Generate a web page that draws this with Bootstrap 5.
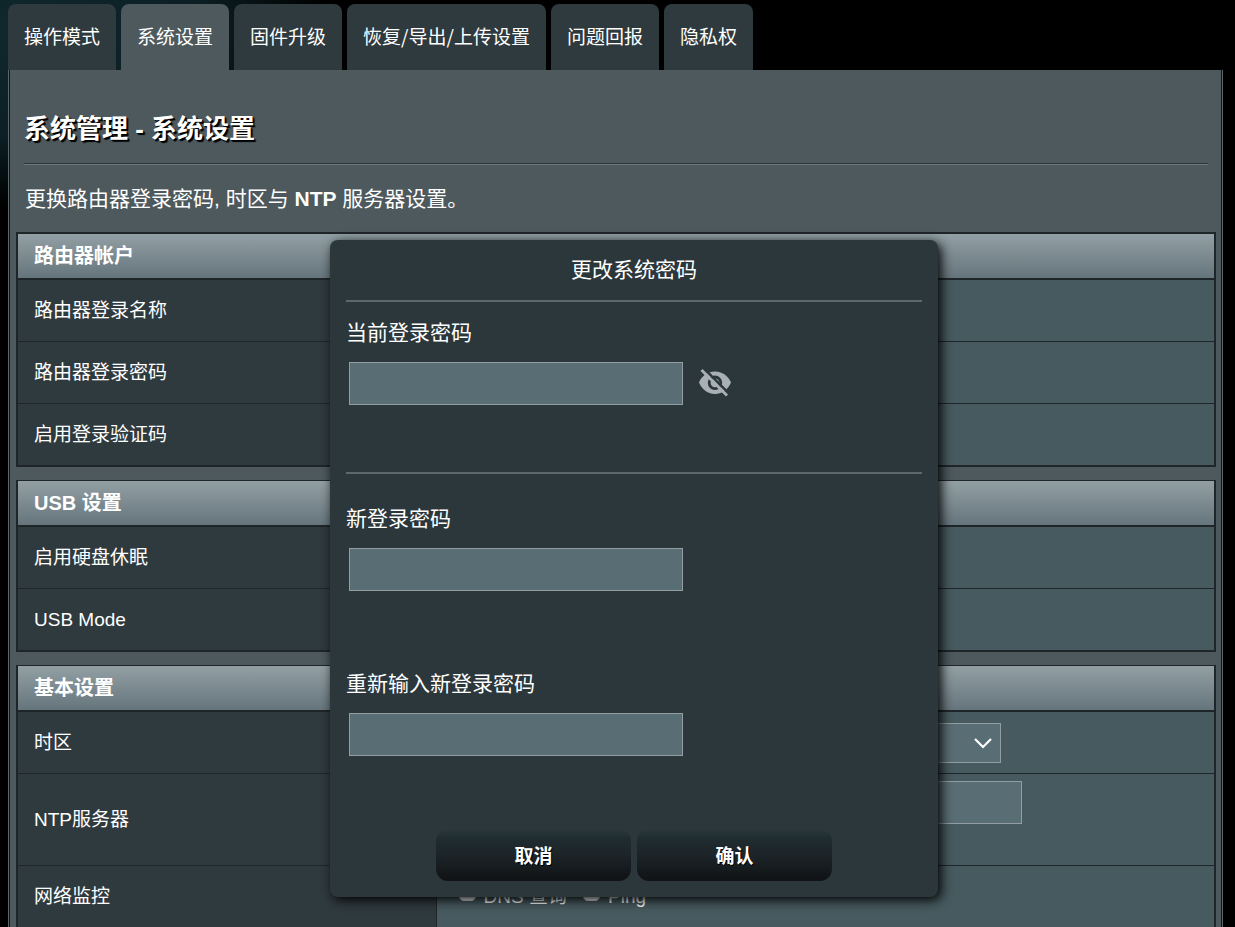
<!DOCTYPE html>
<html lang="zh-CN">
<head>
<meta charset="utf-8">
<meta name="viewport" content="width=device-width, initial-scale=1">
<title>系统管理 - 系统设置</title>
<link href="https://cdn.jsdelivr.net/npm/bootstrap@5.3.0/dist/css/bootstrap.min.css" rel="stylesheet">
<style>
  body {
    background: radial-gradient(ellipse 330px 175px at 0 30px, #0f272d 0, #0c2025 60%, #000 100%) no-repeat #000;
    color: #fff;
    font-family: "Liberation Sans", "Noto Sans CJK SC", sans-serif;
    font-size: 19px;
    line-height: 30px;
  }
  .page-tabs { padding: 4px 8px 0; gap: 5px; font-family: "Noto Sans CJK SC", sans-serif; }
  .page-tabs .nav-link {
    padding: 17px 16px 19px;
    border: 0;
    border-radius: 8px 8px 0 0;
    background: #2f3a3e;
    color: #fff;
    white-space: nowrap;
  }
  .page-tabs .nav-link.active { background: #4d595d; color: #fff; }
  .panel {
    margin: 0 12px 0 8px;
    padding: 43px 6px 0 7px;
    background: #4d595d;
    border: solid #5b676b;
    border-width: 0 1px;
    box-shadow: inset 1px 0 #101517, inset -1px 0 #101517;
  }
  .panel-title { margin: 0 8px 18px; font-size: 26px; line-height: 32px; text-shadow: 1px 1px 0 #000, 2px 2px 1px #000; }
  .rule { height: 2px; background: linear-gradient(#2b373b 50%, #6e787c 50%); margin: 0 8px 19px; }
  .intro { margin: 0 9px 18px; font-size: 21px; }
  .settings { border: 2px solid #1f2629; margin-bottom: 13px; }
  .settings + .settings { border-top-width: 1px; }
  .settings table { width: 100%; border-collapse: separate; border-spacing: 0; table-layout: fixed; }
  .settings thead th {
    height: 46px;
    padding: 0 16px;
    font-size: 20px;
    background: linear-gradient(#92a0a5, #66757c);
    border-bottom: 2px solid #1f2629;
  }
  .settings tbody th, .settings tbody td { height: 62px; border-bottom: 1px solid #1f2629; }
  .settings tbody tr:last-child > * { border-bottom: 0; height: 61px; }
  .settings tbody th { padding: 0 16px; background: #2f3a3e; font-weight: 400; border-right: 1px solid #1f2629; }
  .settings tbody td { padding: 7px 14px; background: #475a5f; }
  .settings .tall-row > * { height: 92px; }
  .field, .field:focus {
    height: 43px;
    padding: 0 12px;
    border: 1px solid #929ea1;
    border-radius: 0;
    background-color: #596d74;
    color: #fff;
    font-size: 19px;
  }
  .zone-field { width: 550px; height: 40px; background-size: 20px 20px; background-position: right 7px center;
    background-image: url("data:image/svg+xml,%3Csvg xmlns='http://www.w3.org/2000/svg' viewBox='0 0 20 20'%3E%3Cpath d='M2 6l8 8 8-8' fill='none' stroke='white' stroke-width='2.2'/%3E%3C/svg%3E"); }
  .ntp-field { width: 571px; }
  .tick { width: 17px; height: 17px; margin: 2px 0 0; border-radius: 2px; }
  .pw-dialog {
    position: absolute;
    top: 240px;
    left: 330px;
    width: 608px;
    padding: 0 16px 16px;
    background: #2b373b;
    border-radius: 8px;
    box-shadow: 3px 3px 12px 0 #000;
  }
  .pw-title { font-size: 21px; line-height: 60px; font-weight: 400; margin: 0; }
  .pw-rule { height: 2px; background: #5d686b; }
  .pw-group { padding-top: 30px; margin-bottom: 48px; }
  .pw-group.first { padding-top: 16px; margin-bottom: 67px; }
  .pw-group.final { margin-bottom: 73px; }
  .pw-group label { display: block; font-size: 21px; margin-bottom: 14px; }
  .pw-field, .pw-field:focus { width: 334px; margin-left: 3px; }
  .eye-btn { width: 32px; height: 32px; margin-left: 16px; padding: 0; border: 0; background: none; }
  .eye-btn svg { display: block; }
  .pw-btn, .pw-btn:hover {
    width: 195px;
    height: 52px;
    padding: 10px 12px 6px;
    border: 0;
    border-radius: 12px;
    background: linear-gradient(#2b373b 0, #1f2c30 18%, #1d2629 45%, #101215 100%);
    color: #fff;
    font-size: 19px;
    font-weight: 700;
    text-shadow: 1px 1px 0 #000;
  }
  .pw-actions { gap: 6px; }
</style>
</head>
<body>
<div class="vh-100 overflow-hidden position-relative">
  <nav class="nav page-tabs flex-nowrap">
    <a class="nav-link" href="#">操作模式</a>
    <a class="nav-link active" href="#" aria-current="page">系统设置</a>
    <a class="nav-link" href="#">固件升级</a>
    <a class="nav-link" href="#">恢复/导出/上传设置</a>
    <a class="nav-link" href="#">问题回报</a>
    <a class="nav-link" href="#">隐私权</a>
  </nav>

  <main class="panel">
    <h1 class="panel-title fw-bold">系统管理 - 系统设置</h1>
    <div class="rule"></div>
    <p class="intro">更换路由器登录密码, 时区与 <b>NTP</b> 服务器设置。</p>

    <section class="settings">
      <table>
        <colgroup><col style="width:35%"><col></colgroup>
        <thead><tr><th colspan="2">路由器帐户</th></tr></thead>
        <tbody>
          <tr><th scope="row">路由器登录名称</th><td></td></tr>
          <tr><th scope="row">路由器登录密码</th><td></td></tr>
          <tr><th scope="row">启用登录验证码</th><td></td></tr>
        </tbody>
      </table>
    </section>

    <section class="settings">
      <table>
        <colgroup><col style="width:35%"><col></colgroup>
        <thead><tr><th colspan="2">USB 设置</th></tr></thead>
        <tbody>
          <tr><th scope="row">启用硬盘休眠</th><td></td></tr>
          <tr><th scope="row">USB Mode</th><td></td></tr>
        </tbody>
      </table>
    </section>

    <section class="settings">
      <table>
        <colgroup><col style="width:35%"><col></colgroup>
        <thead><tr><th colspan="2">基本设置</th></tr></thead>
        <tbody>
          <tr>
            <th scope="row"><label for="zone">时区</label></th>
            <td><select id="zone" class="form-select field zone-field"><option></option></select></td>
          </tr>
          <tr class="tall-row">
            <th scope="row"><label for="ntp">NTP服务器</label></th>
            <td class="align-top"><input id="ntp" type="text" class="form-control field ntp-field"></td>
          </tr>
          <tr>
            <th scope="row">网络监控</th>
            <td>
              <div class="d-flex align-items-start ps-2">
                <input id="dns" type="checkbox" class="form-check-input tick me-2"><label for="dns" class="me-3">DNS 查询</label>
                <input id="ping" type="checkbox" class="form-check-input tick me-2"><label for="ping">Ping</label>
              </div>
            </td>
          </tr>
        </tbody>
      </table>
    </section>
  </main>

  <form class="pw-dialog" role="dialog" aria-labelledby="pw-title">
    <h2 class="pw-title text-center" id="pw-title">更改系统密码</h2>
    <div class="pw-rule"></div>
    <div class="pw-group first">
      <label for="pw-now">当前登录密码</label>
      <div class="d-flex align-items-center">
        <input id="pw-now" type="password" class="form-control field pw-field">
        <button type="button" class="eye-btn" aria-label="显示密码">
          <svg width="32" height="32" viewBox="0 0 32 32">
            <path fill="#aab1b4" fill-rule="evenodd" d="M16 3.500C8 3.500 2.500 8.500 0 14.500c2.500 6 8 11.500 16 11.500s13.500-5.500 16-11.500C29.500 8.500 24 3.500 16 3.500zM16 7.600a7.200 7.200 0 1 1 0 14.400a7.200 7.200 0 0 1 0-14.400z"/>
            <circle cx="16" cy="14.800" r="4.400" fill="#aab1b4"/>
            <path d="M4.800 .400L31 26.600" stroke="#2b373b" stroke-width="2.600"/>
            <path d="M2.500 1.900L28 27.400" stroke="#aab1b4" stroke-width="2.800"/>
          </svg>
        </button>
      </div>
    </div>
    <div class="pw-rule"></div>
    <div class="pw-group">
      <label for="pw-new">新登录密码</label>
      <input id="pw-new" type="password" class="form-control field pw-field">
    </div>
    <div class="pw-group final">
      <label for="pw-again">重新输入新登录密码</label>
      <input id="pw-again" type="password" class="form-control field pw-field">
    </div>
    <div class="d-flex justify-content-center pw-actions">
      <button type="button" class="btn pw-btn">取消</button>
      <button type="submit" class="btn pw-btn">确认</button>
    </div>
  </form>
</div>
<script src="https://cdn.jsdelivr.net/npm/bootstrap@5.3.0/dist/js/bootstrap.bundle.min.js"></script>
</body>
</html>
